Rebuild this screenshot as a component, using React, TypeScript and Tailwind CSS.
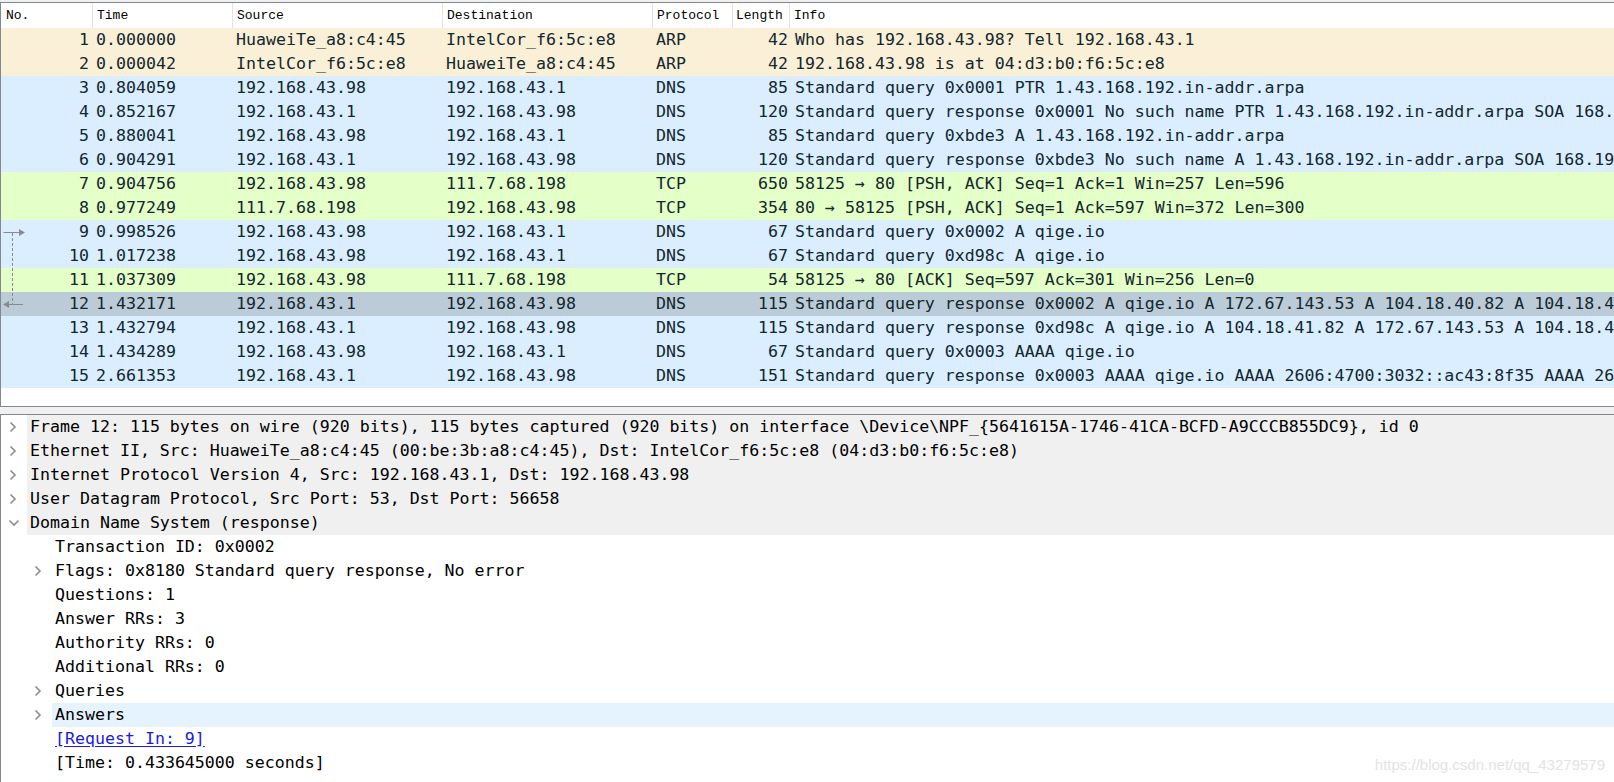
import React from "react";

type Pkt = {
  no: number;
  time: string;
  src: string;
  dst: string;
  proto: string;
  len: number;
  info: string;
  bg: string;
};

const packets: Pkt[] = [
  { no: 1, time: "0.000000", src: "HuaweiTe_a8:c4:45", dst: "IntelCor_f6:5c:e8", proto: "ARP", len: 42, info: "Who has 192.168.43.98? Tell 192.168.43.1", bg: "bg-[#faf0d7]" },
  { no: 2, time: "0.000042", src: "IntelCor_f6:5c:e8", dst: "HuaweiTe_a8:c4:45", proto: "ARP", len: 42, info: "192.168.43.98 is at 04:d3:b0:f6:5c:e8", bg: "bg-[#faf0d7]" },
  { no: 3, time: "0.804059", src: "192.168.43.98", dst: "192.168.43.1", proto: "DNS", len: 85, info: "Standard query 0x0001 PTR 1.43.168.192.in-addr.arpa", bg: "bg-[#daeeff]" },
  { no: 4, time: "0.852167", src: "192.168.43.1", dst: "192.168.43.98", proto: "DNS", len: 120, info: "Standard query response 0x0001 No such name PTR 1.43.168.192.in-addr.arpa SOA 168.192.in-addr.arpa", bg: "bg-[#daeeff]" },
  { no: 5, time: "0.880041", src: "192.168.43.98", dst: "192.168.43.1", proto: "DNS", len: 85, info: "Standard query 0xbde3 A 1.43.168.192.in-addr.arpa", bg: "bg-[#daeeff]" },
  { no: 6, time: "0.904291", src: "192.168.43.1", dst: "192.168.43.98", proto: "DNS", len: 120, info: "Standard query response 0xbde3 No such name A 1.43.168.192.in-addr.arpa SOA 168.192.in-addr.arpa", bg: "bg-[#daeeff]" },
  { no: 7, time: "0.904756", src: "192.168.43.98", dst: "111.7.68.198", proto: "TCP", len: 650, info: "58125 \u2192 80 [PSH, ACK] Seq=1 Ack=1 Win=257 Len=596", bg: "bg-[#e4ffc7]" },
  { no: 8, time: "0.977249", src: "111.7.68.198", dst: "192.168.43.98", proto: "TCP", len: 354, info: "80 \u2192 58125 [PSH, ACK] Seq=1 Ack=597 Win=372 Len=300", bg: "bg-[#e4ffc7]" },
  { no: 9, time: "0.998526", src: "192.168.43.98", dst: "192.168.43.1", proto: "DNS", len: 67, info: "Standard query 0x0002 A qige.io", bg: "bg-[#daeeff]" },
  { no: 10, time: "1.017238", src: "192.168.43.98", dst: "192.168.43.1", proto: "DNS", len: 67, info: "Standard query 0xd98c A qige.io", bg: "bg-[#daeeff]" },
  { no: 11, time: "1.037309", src: "192.168.43.98", dst: "111.7.68.198", proto: "TCP", len: 54, info: "58125 \u2192 80 [ACK] Seq=597 Ack=301 Win=256 Len=0", bg: "bg-[#e4ffc7]" },
  { no: 12, time: "1.432171", src: "192.168.43.1", dst: "192.168.43.98", proto: "DNS", len: 115, info: "Standard query response 0x0002 A qige.io A 172.67.143.53 A 104.18.40.82 A 104.18.41.82", bg: "bg-[#bccbd8]" },
  { no: 13, time: "1.432794", src: "192.168.43.1", dst: "192.168.43.98", proto: "DNS", len: 115, info: "Standard query response 0xd98c A qige.io A 104.18.41.82 A 172.67.143.53 A 104.18.40.82", bg: "bg-[#daeeff]" },
  { no: 14, time: "1.434289", src: "192.168.43.98", dst: "192.168.43.1", proto: "DNS", len: 67, info: "Standard query 0x0003 AAAA qige.io", bg: "bg-[#daeeff]" },
  { no: 15, time: "2.661353", src: "192.168.43.1", dst: "192.168.43.98", proto: "DNS", len: 151, info: "Standard query response 0x0003 AAAA qige.io AAAA 2606:4700:3032::ac43:8f35 AAAA 2606:4700::6812:2952", bg: "bg-[#daeeff]" },
];

function Chevron({ open }: { open?: boolean }) {
  if (open) {
    return (
      <svg width="12" height="8" viewBox="0 0 12 8" className="block">
        <path d="M1.5 1.5 L6 6 L10.5 1.5" fill="none" stroke="#8c8c8c" strokeWidth="1.6" />
      </svg>
    );
  }
  return (
    <svg width="8" height="12" viewBox="0 0 8 12" className="block">
      <path d="M1.5 1.5 L6 6 L1.5 10.5" fill="none" stroke="#8c8c8c" strokeWidth="1.6" />
    </svg>
  );
}

type Node = {
  text: string;
  level: 0 | 1;
  kind: "closed" | "open" | "leaf";
  style?: "top" | "hover";
  link?: boolean;
};

const tree: Node[] = [
  { text: "Frame 12: 115 bytes on wire (920 bits), 115 bytes captured (920 bits) on interface \\Device\\NPF_{5641615A-1746-41CA-BCFD-A9CCCB855DC9}, id 0", level: 0, kind: "closed", style: "top" },
  { text: "Ethernet II, Src: HuaweiTe_a8:c4:45 (00:be:3b:a8:c4:45), Dst: IntelCor_f6:5c:e8 (04:d3:b0:f6:5c:e8)", level: 0, kind: "closed", style: "top" },
  { text: "Internet Protocol Version 4, Src: 192.168.43.1, Dst: 192.168.43.98", level: 0, kind: "closed", style: "top" },
  { text: "User Datagram Protocol, Src Port: 53, Dst Port: 56658", level: 0, kind: "closed", style: "top" },
  { text: "Domain Name System (response)", level: 0, kind: "open", style: "top" },
  { text: "Transaction ID: 0x0002", level: 1, kind: "leaf" },
  { text: "Flags: 0x8180 Standard query response, No error", level: 1, kind: "closed" },
  { text: "Questions: 1", level: 1, kind: "leaf" },
  { text: "Answer RRs: 3", level: 1, kind: "leaf" },
  { text: "Authority RRs: 0", level: 1, kind: "leaf" },
  { text: "Additional RRs: 0", level: 1, kind: "leaf" },
  { text: "Queries", level: 1, kind: "closed" },
  { text: "Answers", level: 1, kind: "closed", style: "hover" },
  { text: "[Request In: 9]", level: 1, kind: "leaf", link: true },
  { text: "[Time: 0.433645000 seconds]", level: 1, kind: "leaf" },
];

export default function App() {
  return (
    <div className="relative w-[1614px] h-[782px] overflow-hidden bg-[#f0f0f0] pt-[2px] text-[#12272e] font-['DejaVu_Sans_Mono',monospace]">
      {/* Packet list */}
      <div className="relative h-[405px] border-t border-l border-b border-[#828790] bg-white overflow-hidden">
        <div className="flex h-[25px] items-center bg-white text-[13px] text-black font-['Liberation_Mono',monospace] whitespace-nowrap">
          <div className="w-[92px] h-full flex items-center pl-[5px] border-r border-[#e3e3e3]">No.</div>
          <div className="w-[140px] h-full flex items-center pl-[4px] border-r border-[#e3e3e3]">Time</div>
          <div className="w-[210px] h-full flex items-center pl-[4px] border-r border-[#e3e3e3]">Source</div>
          <div className="w-[210px] h-full flex items-center pl-[4px] border-r border-[#e3e3e3]">Destination</div>
          <div className="w-[80px] h-full flex items-center pl-[4px] border-r border-[#e3e3e3]">Protocol</div>
          <div className="w-[57px] h-full flex items-center pl-[3px] border-r border-[#e3e3e3]">Length</div>
          <div className="flex-1 h-full flex items-center pl-[4px]">Info</div>
        </div>
        <div className="relative">
          {packets.map((p) => (
            <div key={p.no} className={`flex h-[24px] items-center whitespace-nowrap text-[16.6px] ${p.bg}`}>
              <div className="w-[92px] shrink-0 text-right pr-[4px]">{p.no}</div>
              <div className="w-[140px] shrink-0 pl-[3px]">{p.time}</div>
              <div className="w-[210px] shrink-0 pl-[3px]">{p.src}</div>
              <div className="w-[210px] shrink-0 pl-[3px]">{p.dst}</div>
              <div className="w-[80px] shrink-0 pl-[3px]">{p.proto}</div>
              <div className="w-[57px] shrink-0 text-right pr-[2px]">{p.len}</div>
              <div className="flex-1 pl-[5px] overflow-hidden">{p.info}</div>
            </div>
          ))}
          <svg className="absolute left-0 top-[192px]" width="30" height="96" viewBox="0 0 30 96">
            <path d="M2.5 12.5 H18" stroke="#8a8a8a" strokeWidth="1" fill="none" />
            <path d="M18 9 L24 12.5 L18 16 Z" fill="#8a8a8a" />
            <path d="M11.5 13 V84" stroke="#8a8a8a" strokeWidth="1" strokeDasharray="3 2" fill="none" />
            <path d="M8 84.5 H22" stroke="#8a8a8a" strokeWidth="1" fill="none" />
            <path d="M8 81 L2 84.5 L8 88 Z" fill="#8a8a8a" />
          </svg>
        </div>
      </div>
      {/* splitter */}
      <div className="h-[7px] bg-[#f0f0f0]" />
      {/* Details */}
      <div className="h-[368px] border-t border-l border-[#828790] bg-white whitespace-nowrap text-[16.6px]">
        {tree.map((n, i) => (
          <div key={i} className="flex h-[24px] items-stretch">
            {n.level === 1 && <div className="w-[25px] shrink-0" />}
            <div className="w-[26px] shrink-0 flex items-center justify-center">
              {n.kind === "closed" && <span className="ml-[-2px]"><Chevron /></span>}
              {n.kind === "open" && <Chevron open />}
            </div>
            <div
              className={`flex-1 flex items-center pl-[3px] ${
                n.style === "top" ? "bg-[#f0f0f0]" : n.style === "hover" ? "bg-[#e5f3ff]" : ""
              }`}
            >
              {n.link ? (
                <span className="text-[#1a1ae6] underline underline-offset-2">{n.text}</span>
              ) : (
                <span className="text-black">{n.text}</span>
              )}
            </div>
          </div>
        ))}
      </div>
      <div className="absolute right-[9px] bottom-[6px] text-[15px] text-[#e3e3e3] font-['Liberation_Sans',Arial,sans-serif]">
        https://blog.csdn.net/qq_43279579
      </div>
    </div>
  );
}
